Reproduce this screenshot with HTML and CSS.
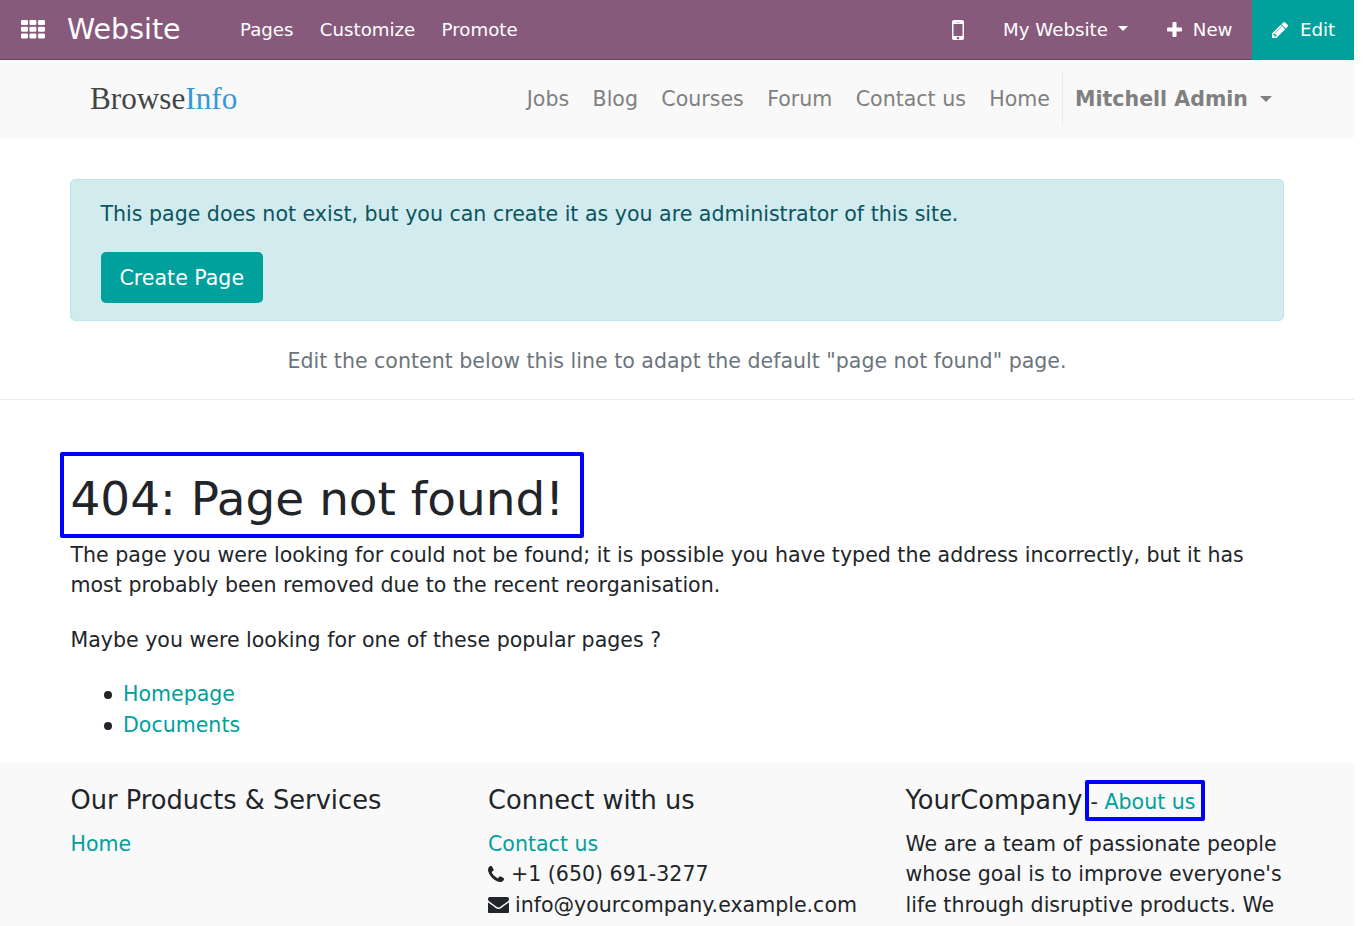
FILE: index.html
```html
<!DOCTYPE html>
<html lang="en">
<head>
<meta charset="utf-8">
<title>404: Page not found!</title>
<link rel="stylesheet" href="styles.css">
</head>
<body>
<div class="page">
  <nav class="topbar">
    <svg class="apps" viewBox="0 0 24 19" fill="currentColor"><rect width="7" height="5" rx="1.3"/><rect x="8.4" width="7" height="5" rx="1.3"/><rect x="17" width="7" height="5" rx="1.3"/><rect y="6.7" width="7" height="5" rx="1.3"/><rect x="8.4" y="6.7" width="7" height="5" rx="1.3"/><rect x="17" y="6.7" width="7" height="5" rx="1.3"/><rect y="13.4" width="7" height="5" rx="1.3"/><rect x="8.4" y="13.4" width="7" height="5" rx="1.3"/><rect x="17" y="13.4" width="7" height="5" rx="1.3"/></svg>
    <span class="brand">Website</span>
    <div class="menu"><span>Pages</span><span>Customize</span><span>Promote</span></div>
    <div class="tools">
      <svg class="mobile" viewBox="512 256 768 1280" fill="currentColor"><path d="M976 1408q0-33-23.500-56.500t-56.500-23.500-56.500 23.500-23.500 56.500 23.500 56.500 56.500 23.500 56.500-23.500 23.500-56.500zm208-160v-704q0-13-9.500-22.500t-22.500-9.500h-512q-13 0-22.500 9.500t-9.500 22.500v704q0 13 9.500 22.500t22.500 9.500h512q13 0 22.500-9.500t9.500-22.500zm-192-848q0-16-16-16h-160q-16 0-16 16t16 16h160q16 0 16-16zm288-16v1024q0 52-38 90t-90 38h-512q-52 0-90-38t-38-90v-1024q0-52 38-90t90-38h512q52 0 90 38t38 90z"/></svg>
      <span class="site">My Website<i class="caret"></i></span>
      <span class="new"><svg class="plus" viewBox="192 128 1408 1408" fill="currentColor"><path d="M1600 736v192q0 40-28 68t-68 28h-416v416q0 40-28 68t-68 28h-192q-40 0-68-28t-28-68v-416h-416q-40 0-68-28t-28-68v-192q0-40 28-68t68-28h416v-416q0-40 28-68t68-28h192q40 0 68 28t28 68v416h416q40 0 68 28t28 68z"/></svg>New</span>
      <span class="edit"><svg class="pencil" viewBox="128 149 1515 1515" fill="currentColor"><path d="M491 1536l91-91-235-235-91 91v107h128v128h107zm523-928q0-22-22-22-10 0-17 7l-542 542q-7 7-7 17 0 22 22 22 10 0 17-7l542-542q7-7 7-17zm-54-192l416 416-832 832h-416v-416zm683 96q0 53-37 90l-166 166-416-416 166-165q36-38 90-38 53 0 91 38l235 234q37 39 37 91z"/></svg>Edit</span>
    </div>
  </nav>
  <header class="header">
    <div class="logo">Browse<span>Info</span></div>
    <div class="links"><span>Jobs</span><span>Blog</span><span>Courses</span><span>Forum</span><span>Contact us</span><span>Home</span></div>
    <div class="user">Mitchell Admin<i class="caret"></i></div>
  </header>
  <section class="notice">
    <div class="alert">
      <p>This page does not exist, but you can create it as you are administrator of this site.</p>
      <a class="button">Create Page</a>
    </div>
    <p class="hint">Edit the content below this line to adapt the default "page not found" page.</p>
  </section>
  <main class="content">
    <h1>404: Page not found!</h1>
    <p class="lead">The page you were looking for could not be found; it is possible you have typed the address incorrectly, but it has<br>most probably been removed due to the recent reorganisation.</p>
    <p class="maybe">Maybe you were looking for one of these popular pages ?</p>
    <ul><li><a>Homepage</a></li><li><a>Documents</a></li></ul>
  </main>
  <footer class="footer">
    <div class="col"><h2>Our Products &amp; Services</h2><div><a>Home</a></div></div>
    <div class="col"><h2>Connect with us</h2>
      <div><a>Contact us</a></div>
      <div class="row"><svg class="phone" viewBox="192 128 1408 1408" fill="currentColor"><path d="M1600 1240q0 27-10 70.500t-21 68.500q-21 50-122 106-94 51-186 51-27 0-53-3.500t-57.500-12.500-47-14.500-55.500-20.500-49-18q-98-35-175-83-127-79-264-216t-216-264q-48-77-83-175-3-9-18-49t-20.500-55.500-14.500-47-12.500-57.500-3.500-53q0-92 51-186 56-101 106-122 25-11 68.500-21t70.500-10q14 0 21 3 18 6 53 76 11 19 30 54t35 63.500 31 53.500q3 4 17.500 25t21.500 35.500 7 28.500q0 20-28.500 50t-62 55-62 53-28.500 46q0 9 5 22.500t8.500 20.500 14 24 11.500 19q76 137 174 235t235 174q2 1 19 11.500t24 14 20.500 8.500 22.500 5q18 0 46-28.500t53-62 55-62 50-28.500q14 0 28.500 7t35.500 21.500 25 17.500q25 15 53.500 31t63.500 35 54 30q70 35 76 53 3 7 3 21z"/></svg>+1 (650) 691-3277</div>
      <div class="row"><svg class="mail" viewBox="0 256 1792 1408" preserveAspectRatio="none" fill="currentColor"><path d="M1792 710v794q0 66-47 113t-113 47h-1472q-66 0-113-47t-47-113v-794q44 49 101 87 362 246 497 345 57 42 92.500 65.500t94.500 48 110 24.500h2q51 0 110-24.500t94.500-48 92.500-65.500q170-123 498-345 57-39 100-87zm0-294q0 79-49 151t-122 123q-376 261-468 325-10 7-42.500 31t-54 38.500-52 32.500-57.500 27-50 9h-2q-23 0-50-9t-57.500-27-52-32.500-54-38.500-42.500-31q-91-64-262-182.500t-205-142.500q-62-42-117-115.500t-55-136.500q0-78 41.500-130t118.500-52h1472q65 0 112.500 47t47.500 113z"/></svg>info@yourcompany.example.com</div>
    </div>
    <div class="col"><h2 class="company">YourCompany<span class="about">- <a>About us</a></span></h2>
      <div>We are a team of passionate people<br>whose goal is to improve everyone's<br>life through disruptive products. We</div>
    </div>
  </footer>
</div>
</body>
</html>
```
FILE: styles.css
```css
* { box-sizing: border-box; }
body { margin: 0; height: 926px; overflow: hidden; background: #fff; color: #212529; font: 20.56px/30.4px "DejaVu Sans", sans-serif; white-space: nowrap; }
h1, h2, p, ul { margin: 0; font-weight: 400; }
svg { display: block; flex: none; }
a { color: #00a09d; }
.page { width: 1354px; height: 926px; overflow: hidden; display: flex; flex-direction: column; }
.topbar { height: 60px; flex: none; display: flex; align-items: center; padding: 0 0 0 20.500px; background: #875a7b; color: #fff; font-size: 18.2px; box-shadow: inset 0 -1px #68465f; }
.apps { width: 24px; height: 19px; margin-bottom: 2px; }
.brand { width: 173px; margin-left: 22.500px; font-size: 28.5px; }
.menu { display: flex; gap: 26.3px; }
.tools { margin-left: auto; display: flex; align-items: center; height: 60px; }
.mobile { width: 12px; height: 20px; margin-right: 39px; }
.caret { width: 0; height: 0; border: 5px solid transparent; border-top-color: currentColor; border-bottom: 0; }
.site { display: flex; align-items: center; gap: 10px; margin-right: 39px; }
.site .caret { margin-top: -3px; }
.new { display: flex; align-items: center; gap: 11px; }
.plus { width: 15px; height: 15px; margin-bottom: 2px; }
.edit { display: flex; align-items: center; gap: 12px; margin-left: 19.500px; width: 102px; height: 60px; padding-left: 20px; background: #00a09d; }
.pencil { width: 16px; height: 16px; }
.header { height: 78px; flex: none; display: flex; align-items: center; padding: 0 82px 0 90px; background: #f9f9f9; color: #808080; }
.logo { color: #444; font: 31.2px/40px "Liberation Serif", serif; }
.logo span { color: #3498db; }
.links { margin-left: auto; display: flex; gap: 23.400px; }
.user { display: flex; align-items: center; gap: 12px; height: 54px; margin-left: 12px; padding-left: 12px; border-left: 1px solid #e9ecef; font-weight: 700; }
.user .caret { border-width: 6px 6px 0; margin-top: -1px; }
.notice { height: 262px; flex: none; padding: 41px 70px 0; border-bottom: 1px solid #e9ecef; }
.alert { height: 142px; padding: 19px 29.500px; color: #0c5460; background: #d1ebef; border: 1px solid #bee5eb; border-radius: 5px; }
.button { display: inline-flex; align-items: center; height: 51px; margin-top: 23px; padding: 0 19px; color: #fff; background: #00a09d; border-radius: 5px; }
.hint { margin-top: 25px; text-align: center; color: #6c757d; }
.content { height: 363px; flex: none; padding: 52px 60px 0; }
.content h1 { width: 524px; height: 86px; padding: 4px 7px 0 6.500px; border: 4px solid #00f; border-radius: 2px; font-size: 46.9px; line-height: 77px; }
.lead, .maybe { padding-left: 10.500px; }
.lead { margin-top: 2px; }
.maybe { margin-top: 24px; }
.content ul { margin-top: 24px; padding-left: 44px; list-style: none; }
.content li { display: flex; align-items: center; gap: 11px; }
.content li::before { content: ""; width: 8px; height: 8px; margin-top: 2px; border-radius: 50%; background: #212529; }
.footer { flex: 1; display: grid; grid-template-columns: 417.500px 417.500px 1fr; padding: 20px 0 0 70.500px; background: #f9f9f9; }
.footer h2 { height: 46px; font-size: 25.7px; line-height: 34px; }
.row { display: flex; align-items: center; }
.phone { width: 16px; height: 16px; margin: -2px 7px 0 0; }
.mail { width: 21px; height: 16.500px; margin-right: 6px; }
.company { display: flex; align-items: flex-start; }
.about { height: 41px; width: 120px; margin: -3px 0 0 2px; padding-left: 2px; border: 4px solid #00f; border-radius: 2px; font-size: 20.56px; line-height: 37px; }
```
